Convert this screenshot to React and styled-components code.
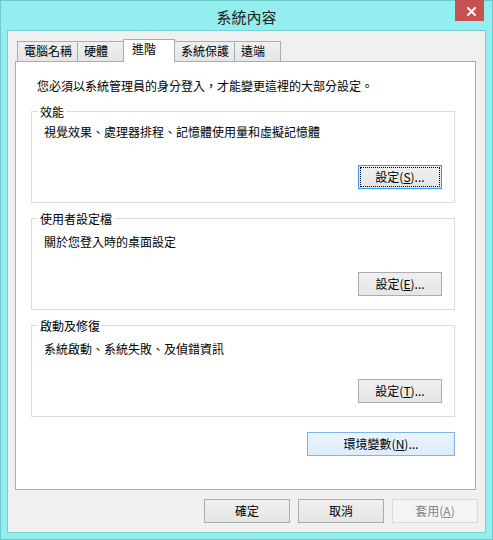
import React from "react";
import styled, { createGlobalStyle } from "styled-components";

const GlobalStyle = createGlobalStyle`
  html, body {
    margin: 0;
    padding: 0;
    background: #ffffff;
  }

  body {
    font-family: "Noto Sans CJK TC", "Noto Sans", sans-serif;
    font-size: 12px;
    color: #000;
  }

  * {
    box-sizing: border-box;
  }
`;

const tabs = ["電腦名稱", "硬體", "進階", "系統保護", "遠端"];

const groups = [
  {
    title: "效能",
    text: "視覺效果、處理器排程、記憶體使用量和虛擬記憶體",
    key: "S",
    offset: 4,
    focused: true,
  },
  {
    title: "使用者設定檔",
    text: "關於您登入時的桌面設定",
    key: "E",
    offset: 7,
  },
  {
    title: "啟動及修復",
    text: "系統啟動、系統失敗、及偵錯資訊",
    key: "T",
    offset: 7,
  },
];

const App = () => {
  return (
    <>
      <GlobalStyle />
      <Window>
        <TitleBar>
          <Title>系統內容</Title>
          <CloseButton aria-label="關閉">
            <svg width="9" height="9" viewBox="0 0 9 9">
              <path
                d="M1 1L8 8M8 1L1 8"
                stroke="#fff"
                strokeWidth="2"
                strokeLinecap="square"
              />
            </svg>
          </CloseButton>
        </TitleBar>

        <Client>
          <TabRow>
            {tabs.map((t) => (
              <Tab key={t} $active={t === "進階"}>
                {t}
              </Tab>
            ))}
          </TabRow>

          <Panel>
            <Intro>您必須以系統管理員的身分登入，才能變更這裡的大部分設定。</Intro>

            {groups.map((g) => (
              <Group key={g.title}>
                <Legend>{g.title}</Legend>
                <Desc $offset={g.offset}>{g.text}</Desc>
                <Button $w={84} $variant={g.focused ? "focus" : undefined}>
                  設定(<u>{g.key}</u>)...
                </Button>
              </Group>
            ))}

            <EnvButton $w={148} $variant="hover">
              環境變數(<u>N</u>)...
            </EnvButton>
          </Panel>

          <Footer>
            <Button $w={86}>確定</Button>
            <Button $w={86}>取消</Button>
            <Button $w={86} disabled>
              套用(<u>A</u>)
            </Button>
          </Footer>
        </Client>
      </Window>
    </>
  );
};

export default App;

const Window = styled.div`
  width: 493px;
  height: 540px;
  border: 1px solid #6ccaca;
  background: #93efef;
  padding: 0 6px 6px;
  display: flex;
  flex-direction: column;
`;

const TitleBar = styled.div`
  height: 29px;
  display: grid;
  grid-template-columns: 1fr auto 1fr;
  align-items: center;
`;

const Title = styled.div`
  grid-column: 2;
  font-size: 15px;
  line-height: 20px;
  padding-top: 2px;
  color: #222;
`;

const CloseButton = styled.button`
  grid-column: 3;
  justify-self: end;
  align-self: start;
  width: 29px;
  height: 21px;
  margin: -1px 2px 0 0;
  padding: 1px 0 0 3px;
  border: none;
  background: #c75050;
  display: flex;
  align-items: center;
  justify-content: center;
`;

const Client = styled.div`
  flex: 1;
  border: 1px solid #7ccfcf;
  background: #f0f0f0;
  padding: 8px 7px 9px 7px;
  display: flex;
  flex-direction: column;
`;

const TabRow = styled.div`
  height: 22px;
  padding-left: 2px;
  display: flex;
  align-items: flex-end;
`;

const Tab = styled.div`
  position: relative;
  z-index: ${(p) => (p.$active ? 2 : 0)};
  height: ${(p) => (p.$active ? 23 : 20)}px;
  min-width: ${(p) => (p.$active ? 52 : 47)}px;
  margin-bottom: ${(p) => (p.$active ? -1 : 0)}px;
  margin-left: -1px;
  padding: ${(p) => (p.$active ? "0 8px" : "0 5px 0 6px")};
  border: 1px solid #acacac;
  border-bottom: none;
  background: ${(p) =>
    p.$active ? "#ffffff" : "linear-gradient(#f0f0f0, #e5e5e5)"};
  line-height: 18px;
  white-space: nowrap;

  &:first-child {
    margin-left: 0;
  }
`;

const Panel = styled.div`
  position: relative;
  z-index: 1;
  height: 429px;
  margin-right: 2px;
  border: 1px solid #acacac;
  background: #ffffff;
  padding: 16px 20px 0 15px;
  display: flex;
  flex-direction: column;
`;

const Intro = styled.div`
  padding-left: 6px;
  line-height: 16px;
  margin-bottom: 17px;
`;

const Group = styled.div`
  height: 92px;
  border: 1px solid #dcdcdc;
  padding: 0 12px 13px 0;
  display: flex;
  flex-direction: column;

  & + & {
    margin-top: 15px;
  }
`;

const Legend = styled.span`
  align-self: flex-start;
  margin: -8px 0 0 6px;
  padding: 0 2px;
  background: #ffffff;
  line-height: 16px;
`;

const Desc = styled.div`
  margin-top: ${(p) => p.$offset}px;
  padding-left: 12px;
  line-height: 16px;
`;

const Button = styled.button`
  width: ${(p) => p.$w}px;
  height: 24px;
  padding: 0;
  font: inherit;
  line-height: 20px;
  color: #000;
  border: 1px solid #acacac;
  background: linear-gradient(#f0f0f0, #e5e5e5);
  white-space: nowrap;

  ${Group} & {
    margin-top: auto;
    align-self: flex-end;
  }

  ${(p) =>
    p.$variant === "focus" &&
    `
    border-color: #3399ff;
    outline: 1px dotted #000;
    outline-offset: -3px;
  `}

  ${(p) =>
    p.$variant === "hover" &&
    `
    border-color: #7eb4ea;
    background: linear-gradient(#ecf4fc, #dcecfc);
  `}

  &:disabled {
    border-color: #d9d9d9;
    background: #f4f4f4;
    color: #838383;
  }
`;

const EnvButton = styled(Button)`
  margin-top: 15px;
  align-self: flex-end;
`;

const Footer = styled.div`
  margin-top: 9px;
  display: flex;
  justify-content: flex-end;
  gap: 8px;
`;
